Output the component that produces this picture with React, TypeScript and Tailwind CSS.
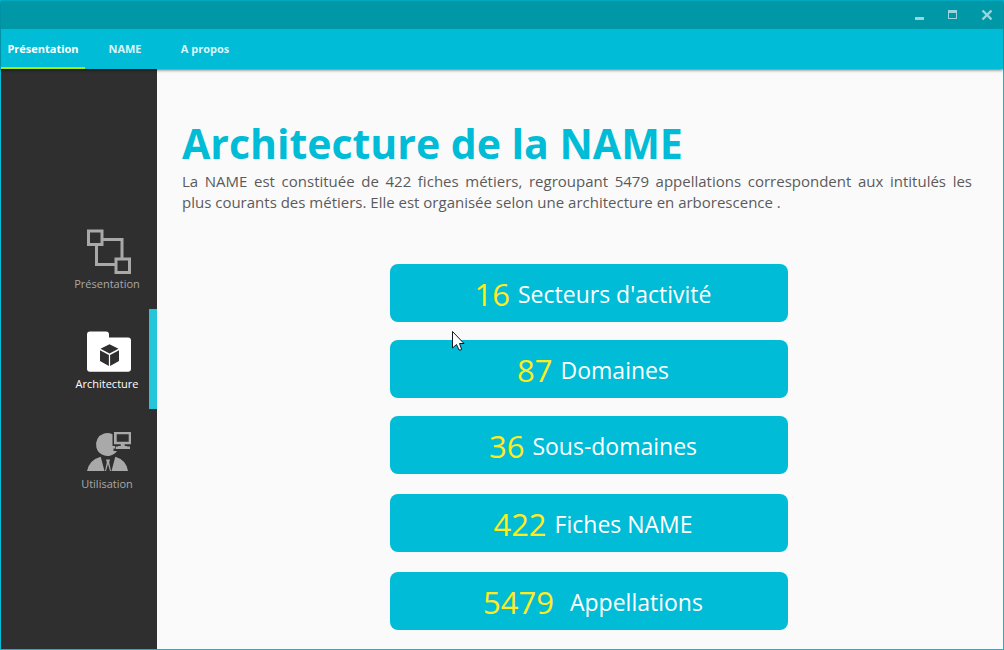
import type { ReactNode } from "react";

const tabs = [
  { label: "Présentation", active: true, width: "w-[84px]" },
  { label: "NAME", active: false, width: "w-20" },
  { label: "A propos", active: false, width: "w-20" },
];

const stats = [
  { value: "16", label: "Secteurs d'activité", gap: "gap-2", margin: "mb-[18px]" },
  { value: "87", label: "Domaines", gap: "gap-2", margin: "mb-[18px]" },
  { value: "36", label: "Sous-domaines", gap: "gap-2", margin: "mb-5" },
  { value: "422", label: "Fiches NAME", gap: "gap-2", margin: "mb-5" },
  { value: "5479", label: "Appellations", gap: "gap-4", margin: "mb-[18px]" },
];

function DiagramIcon() {
  return (
    <svg width="44" height="46" viewBox="0 0 44 46" fill="none" stroke="currentColor" aria-hidden="true">
      <path d="M16 10.5H35V29M9.500 17V35.500H28" strokeWidth="3" />
      <rect x="1.500" y="2" width="13.500" height="13.500" strokeWidth="3" />
      <rect x="29" y="30" width="13.500" height="13.500" strokeWidth="3" />
    </svg>
  );
}

function FolderIcon() {
  return (
    <svg width="44" height="46" viewBox="0 0 44 46" aria-hidden="true">
      <path
        d="M3 2.500H19Q22 2.500 22 5.500V8.500H41Q44 8.500 44 11.500V39.700Q44 42.700 41 42.700H3Q0 42.700 0 39.700V5.500Q0 2.500 3 2.500Z"
        fill="currentColor"
      />
      <path d="M22.500 15.200L31.500 19.700L22.500 24.500L13.500 19.700Z" fill="#2f2f2f" />
      <path d="M13 21.200L21.900 26V37L13 32Z" fill="#2f2f2f" />
      <path d="M32 21.200L23.100 26V37L32 32Z" fill="#2f2f2f" />
    </svg>
  );
}

function UserIcon() {
  return (
    <svg width="44" height="46" viewBox="0 0 44 46" fill="currentColor" aria-hidden="true">
      <path d="M25.500 5.200A11.500 11.500 0 1 0 30 22H26.500V19.500H28V17H25.500Z" />
      <path fillRule="evenodd" d="M27 3H44V15.300H37.700V17H40V17.500H43V20H28.700V17.500H31V17H33.700V15.300H27ZM29.700 5.300V12.700H41.700V5.300Z" />
      <path d="M0 42Q2 31 13.700 27.700L17.500 42ZM41 42Q39.500 31 28.300 27.700L24.500 42Z" />
      <path d="M19 30.500H23L22.200 33.500L24 42H23L21 35L19 42H18L19.800 33.500Z" />
    </svg>
  );
}

function SideItem({ label, active = false, children }: { label: string; active?: boolean; children: ReactNode }) {
  return (
    <button
      type="button"
      aria-current={active ? "page" : undefined}
      className={`flex h-[100px] w-full justify-end border-r-8 ${
        active ? "border-[#26c6da] text-white" : "border-transparent text-[#a9a9a9]"
      }`}
    >
      <span className="flex w-[84px] flex-col items-center pt-5">
        <span className="pl-1">{children}</span>
        <span className="text-[11px] leading-[18px]">{label}</span>
      </span>
    </button>
  );
}

function WindowControls() {
  return (
    <div className="flex items-center text-[#99d5dc]">
      <button type="button" aria-label="Réduire" className="flex h-7 w-[34px] items-center justify-center">
        <svg width="11" height="11" viewBox="0 0 11 11" aria-hidden="true">
          <path d="M2 7H11V10H2Z" fill="currentColor" />
        </svg>
      </button>
      <button type="button" aria-label="Agrandir" className="flex h-7 w-[34px] items-center justify-center">
        <svg width="11" height="11" viewBox="0 0 11 11" aria-hidden="true">
          <path fillRule="evenodd" d="M1 0H10V9H1ZM2 3V8H9V3Z" fill="currentColor" />
        </svg>
      </button>
      <button type="button" aria-label="Fermer" className="flex h-7 w-[34px] items-center justify-center">
        <svg width="11" height="11" viewBox="0 0 11 11" aria-hidden="true">
          <path d="M1.500 0.500L10.500 9.500M10.500 0.500L1.500 9.500" stroke="currentColor" strokeWidth="2.400" />
        </svg>
      </button>
    </div>
  );
}

export default function App() {
  return (
    <div className="relative flex min-h-screen flex-col border border-[#00bcd6] bg-[#fafafa] font-['Open_Sans','Noto_Sans',sans-serif]">
      <header className="relative z-10 bg-[#00bcd6] shadow-[0_1px_3px_rgba(0,0,0,0.6)]">
        <div className="flex h-7 justify-end bg-[#0097a7]">
          <WindowControls />
        </div>
        <nav className="flex h-10">
          {tabs.map((tab) => (
            <a
              key={tab.label}
              href="#"
              className={`flex items-center justify-center border-b-2 pt-[2px] text-[11px] font-bold ${tab.width} ${
                tab.active ? "border-[#aeea00] text-white" : "border-transparent text-[#d9f5f9]"
              }`}
            >
              {tab.label}
            </a>
          ))}
        </nav>
      </header>

      <div className="flex flex-1">
        <aside className="flex w-[156px] shrink-0 flex-col justify-center bg-[#2f2f2f]">
          <SideItem label="Présentation">
            <DiagramIcon />
          </SideItem>
          <SideItem label="Architecture" active>
            <FolderIcon />
          </SideItem>
          <SideItem label="Utilisation">
            <UserIcon />
          </SideItem>
        </aside>

        <main className="flex-1 pt-[46px] pr-[7px] pl-[25px]">
          <h1 className="text-[41px] leading-[56px] font-bold text-[#00bcd6]">Architecture de la NAME</h1>
          <p className="pr-6 text-justify text-[15px] leading-[21px] text-[#5a5a5a]">
            La NAME est constituée de 422 fiches métiers, regroupant 5479 appellations correspondent aux intitulés les
            {" plus\u00a0courants des métiers. Elle est organisée selon une architecture en arborescence ."}
          </p>
          <ul className="mt-[51px] flex flex-col items-center">
            {stats.map((stat) => (
              <li
                key={stat.label}
                className={`flex h-[58px] w-[398px] items-center justify-center rounded-lg bg-[#00bcd6] pt-[2px] pl-2 ${stat.gap} ${stat.margin}`}
              >
                <span className="text-[31px] leading-[42px] text-[#ffeb1f]">{stat.value}</span>
                <span className="text-[23px] leading-8 text-white">{stat.label}</span>
              </li>
            ))}
          </ul>
        </main>
      </div>

      <svg
        width="13"
        height="20"
        viewBox="0 0 13 20"
        aria-hidden="true"
        className="pointer-events-none absolute top-[330px] left-[451px]"
      >
        <path
          d="M0.500 0.500V17L4.500 13.500L7 19H9L9.500 18L7.500 12.500H12Z"
          fill="white"
          stroke="#111827"
          strokeWidth="1"
        />
      </svg>
    </div>
  );
}
